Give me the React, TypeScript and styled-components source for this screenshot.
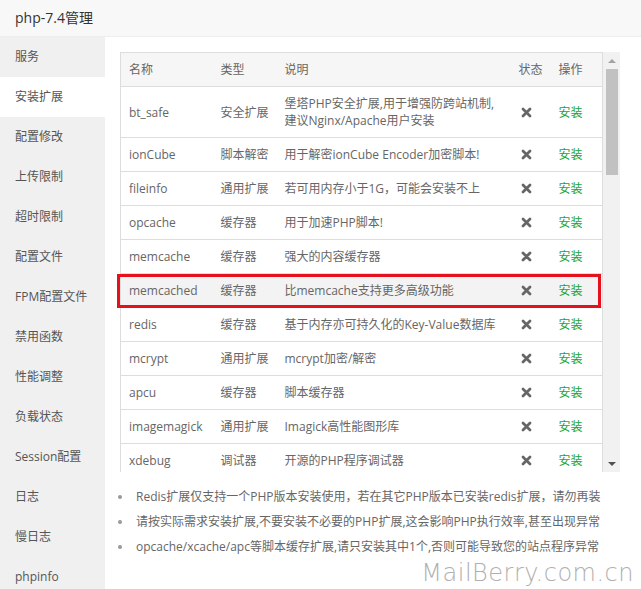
import styled, { createGlobalStyle } from "styled-components";

interface IExtension {
  name: string;
  type: string;
  desc: string;
  active?: boolean;
}

const MENU = [
  "服务",
  "安装扩展",
  "配置修改",
  "上传限制",
  "超时限制",
  "配置文件",
  "FPM配置文件",
  "禁用函数",
  "性能调整",
  "负载状态",
  "Session配置",
  "日志",
  "慢日志",
  "phpinfo",
];

const EXTENSIONS: IExtension[] = [
  { name: "bt_safe", type: "安全扩展", desc: "堡塔PHP安全扩展,用于增强防跨站机制,建议Nginx/Apache用户安装" },
  { name: "ionCube", type: "脚本解密", desc: "用于解密ionCube Encoder加密脚本!" },
  { name: "fileinfo", type: "通用扩展", desc: "若可用内存小于1G，可能会安装不上" },
  { name: "opcache", type: "缓存器", desc: "用于加速PHP脚本!" },
  { name: "memcache", type: "缓存器", desc: "强大的内容缓存器" },
  { name: "memcached", type: "缓存器", desc: "比memcache支持更多高级功能", active: true },
  { name: "redis", type: "缓存器", desc: "基于内存亦可持久化的Key-Value数据库" },
  { name: "mcrypt", type: "通用扩展", desc: "mcrypt加密/解密" },
  { name: "apcu", type: "缓存器", desc: "脚本缓存器" },
  { name: "imagemagick", type: "通用扩展", desc: "Imagick高性能图形库" },
  { name: "xdebug", type: "调试器", desc: "开源的PHP程序调试器" },
];

const TIPS = [
  "Redis扩展仅支持一个PHP版本安装使用，若在其它PHP版本已安装redis扩展，请勿再装",
  "请按实际需求安装扩展,不要安装不必要的PHP扩展,这会影响PHP执行效率,甚至出现异常",
  "opcache/xcache/apc等脚本缓存扩展,请只安装其中1个,否则可能导致您的站点程序异常",
];

// visible part of the list vs. the whole list, for the scrollbar thumb
const THUMB_RATIO = 0.275;

const CrossIcon = () => (
  <svg width="11" height="11" viewBox="0 0 11 11">
    <path
      d="M2 2L9 9M9 2L2 9"
      stroke="#666"
      strokeWidth="2.8"
      strokeLinecap="round"
    />
  </svg>
);

const App = () => {
  return (
    <>
      <GlobalStyle />
      <Layer>
        <TitleBar>php-7.4管理</TitleBar>
        <Body>
          <Sidebar>
            {MENU.map((item) => (
              <MenuItem key={item} $active={item === "安装扩展"}>
                {item}
              </MenuItem>
            ))}
          </Sidebar>
          <Content>
            <ListFrame>
              <Viewport>
                <Table>
                  <colgroup>
                    <col style={{ width: 92 }} />
                    <col style={{ width: 64 }} />
                    <col />
                    <col style={{ width: 40 }} />
                    <col style={{ width: 52 }} />
                  </colgroup>
                  <thead>
                    <tr>
                      <Th>名称</Th>
                      <Th>类型</Th>
                      <Th>说明</Th>
                      <Th>状态</Th>
                      <Th>操作</Th>
                    </tr>
                  </thead>
                  <tbody>
                    {EXTENSIONS.map((ext) => (
                      <Row key={ext.name} $active={!!ext.active}>
                        <Td>{ext.name}</Td>
                        <Td>{ext.type}</Td>
                        <Td>{ext.desc}</Td>
                        <StatusCell>
                          <CrossIcon />
                        </StatusCell>
                        <Td>
                          <InstallLink>安装</InstallLink>
                        </Td>
                      </Row>
                    ))}
                  </tbody>
                </Table>
              </Viewport>
              <ScrollBar>
                <ScrollArrow $dir="up" />
                <ScrollTrack>
                  <Thumb style={{ height: `${THUMB_RATIO * 100}%` }} />
                </ScrollTrack>
                <ScrollArrow $dir="down" />
              </ScrollBar>
            </ListFrame>
            <Highlight />
            <Tips>
              {TIPS.map((tip) => (
                <Tip key={tip}>{tip}</Tip>
              ))}
            </Tips>
            <Watermark>MailBerry.com.cn</Watermark>
          </Content>
        </Body>
      </Layer>
    </>
  );
};

const GlobalStyle = createGlobalStyle`
  html, body {
    margin: 0;
    padding: 0;
    overflow: hidden;
    background: #fff;
  }
  body {
    font-family: "Open Sans", "Noto Sans CJK SC", sans-serif;
    font-size: 12px;
    color: #666;
  }
`;

const Layer = styled.div`
  width: 641px;
  height: 589px;
  display: flex;
  flex-direction: column;
  overflow: hidden;
`;

const TitleBar = styled.div`
  height: 36px;
  line-height: 36px;
  padding-left: 15px;
  font-size: 14px;
  color: #333;
  background: #f8f8f8;
  border-bottom: 1px solid #eee;
  flex-shrink: 0;
`;

const Body = styled.div`
  flex: 1;
  display: flex;
  min-height: 0;
`;

const Sidebar = styled.div`
  width: 105px;
  flex-shrink: 0;
  background: #f0f0f0;
`;

const MenuItem = styled.div<{ $active: boolean }>`
  height: 40px;
  line-height: 40px;
  padding-left: 15px;
  color: #555;
  background: ${({ $active }) => ($active ? "#fff" : "transparent")};
`;

const Content = styled.div`
  flex: 1;
  position: relative;
  padding: 15px;
`;

const ListFrame = styled.div`
  display: flex;
  width: 500px;
  height: 420px;
`;

const Viewport = styled.div`
  width: 483px;
  height: 100%;
  overflow: hidden;
`;

const ScrollBar = styled.div`
  width: 17px;
  display: flex;
  flex-direction: column;
  background: #f1f1f1;
`;

const ScrollArrow = styled.div<{ $dir: "up" | "down" }>`
  height: 17px;
  display: flex;
  align-items: center;
  justify-content: center;

  &::after {
    content: "";
    width: 0;
    height: 0;
    border-left: 4px solid transparent;
    border-right: 4px solid transparent;
    ${({ $dir }) =>
      $dir === "up"
        ? "border-bottom: 4px solid #a3a3a3;"
        : "border-top: 4px solid #505050;"}
  }
`;

const ScrollTrack = styled.div`
  flex: 1;
  padding: 0 2px 0 3px;
`;

const Thumb = styled.div`
  background: #c1c1c1;
`;

const Table = styled.table`
  width: 100%;
  table-layout: fixed;
  border-collapse: collapse;
  border: 1px solid #ddd;
`;

const Th = styled.th`
  padding: 8px 8px;
  line-height: 17px;
  font-weight: normal;
  text-align: left;
  color: #666;
  background: #f6f6f6;
  border-bottom: 1px solid #ddd;
`;

const Row = styled.tr<{ $active: boolean }>`
  background: ${({ $active }) => ($active ? "#f3f3f3" : "#fff")};
`;

const Td = styled.td`
  padding: 8px 8px;
  line-height: 17px;
  color: #666;
  border-bottom: 1px solid #ddd;
  vertical-align: middle;
  word-break: break-all;
`;

const StatusCell = styled(Td)`
  padding-left: 10px;

  svg {
    display: block;
  }
`;

const InstallLink = styled.a`
  color: #20a53a;
  cursor: pointer;
`;

const Highlight = styled.div`
  position: absolute;
  left: 12px;
  top: 237px;
  width: 478px;
  height: 28px;
  border: 3px solid #e5121d;
  pointer-events: none;
`;

const Tips = styled.ul`
  list-style: none;
  margin: 12px 0 0 -2px;
  padding: 0;
`;

const Tip = styled.li`
  position: relative;
  padding-left: 18px;
  line-height: 25px;
  color: #666;
  white-space: nowrap;

  &::before {
    content: "";
    position: absolute;
    left: 0;
    top: 11px;
    width: 4px;
    height: 4px;
    border-radius: 50%;
    background: #999;
  }
`;

const Watermark = styled.div`
  position: absolute;
  right: 7px;
  bottom: 2px;
  font-family: "DejaVu Sans", sans-serif;
  font-weight: 200;
  font-size: 24px;
  letter-spacing: 0.5px;
  color: #b0b0b0;
  pointer-events: none;
`;

export default App;
